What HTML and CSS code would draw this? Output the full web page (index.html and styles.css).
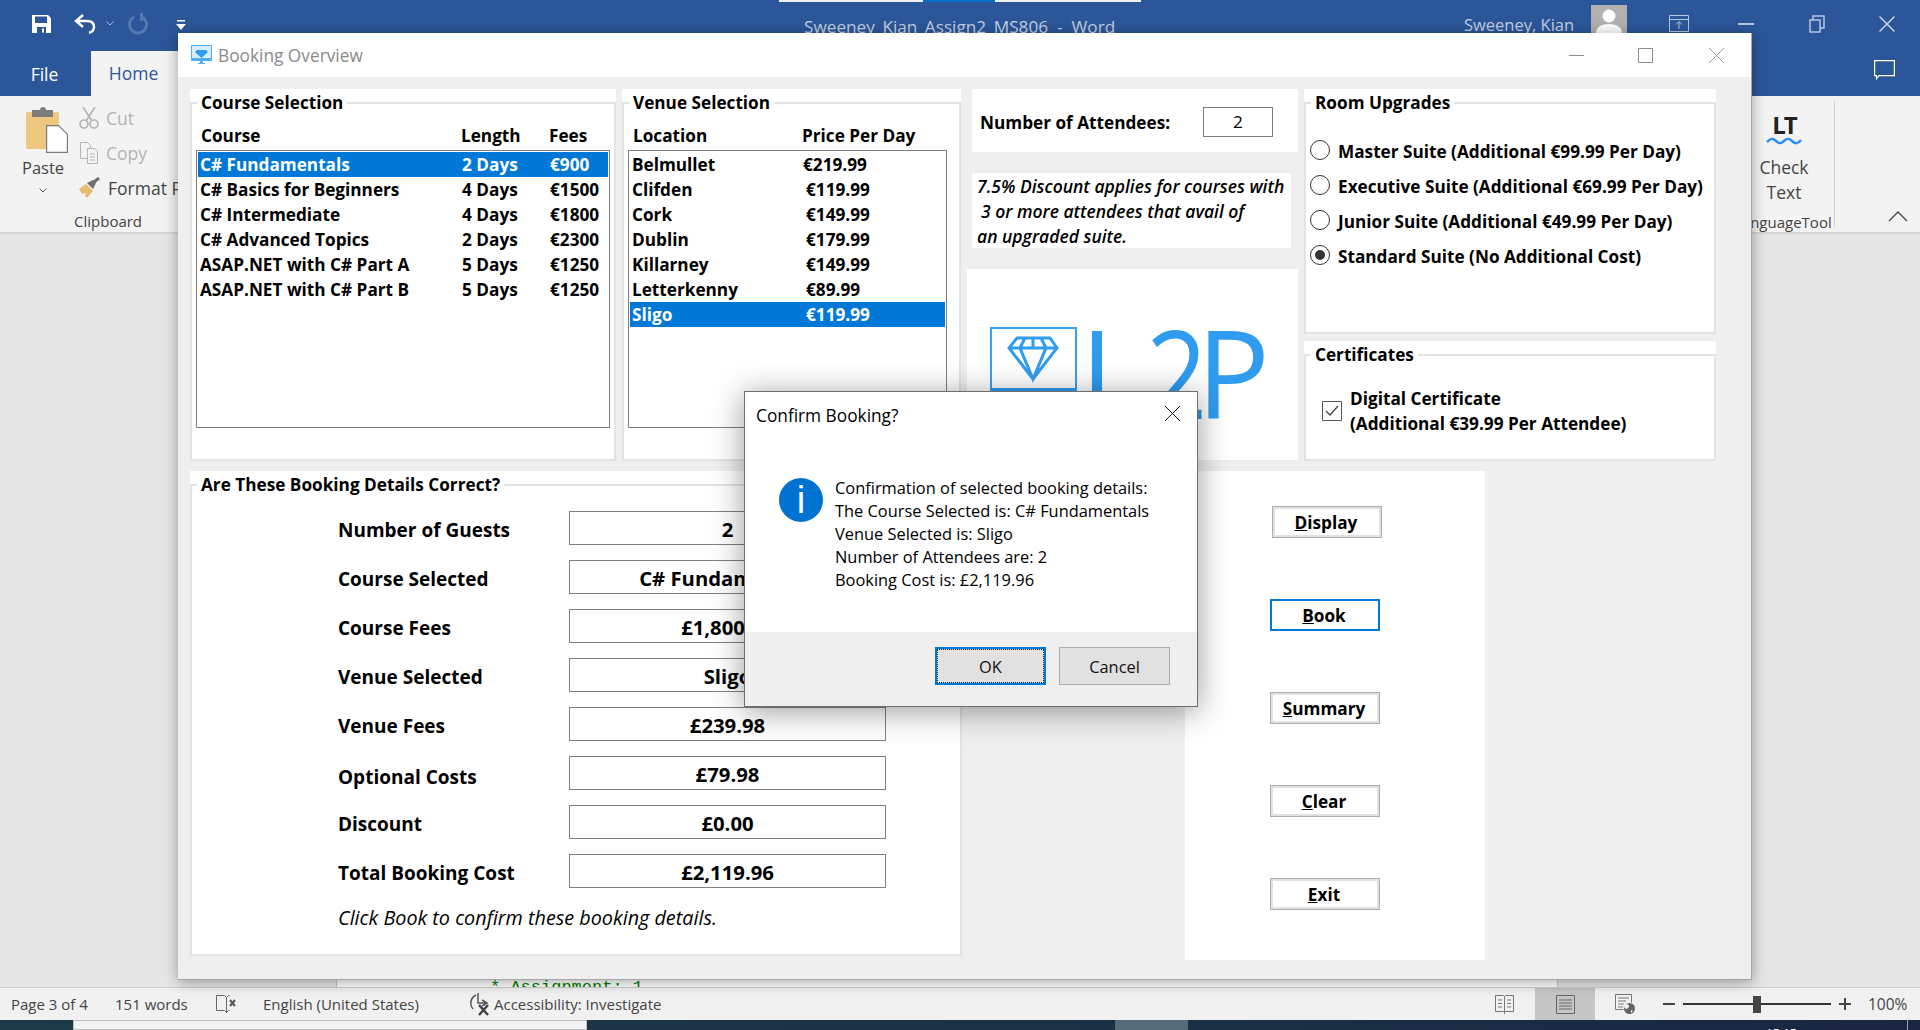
FILE: index.html
```html
<!DOCTYPE html>
<html lang="en">
<head>
    <meta charset="UTF-8">
    <meta name="viewport" content="width=device-width, initial-scale=1.0">
    <title>Booking Overview</title>
    <link rel="stylesheet" href="styles.css">
</head>
<body>
    <div class="word">
        <div class="titlebar">
            <div class="save-strip"><span class="strip-a"></span><span class="strip-b"></span><span class="strip-c"></span></div>
            <svg class="qat-save" width="19" height="19" viewBox="0 0 19 19"><path fill="#fff" d="M0 1h16l3 3v15H0z"/><path fill="#2b579a" d="M3 2.500h12v6.500H3zM5 13h9v6H5z"/><path fill="#fff" d="M10 14.500h2v4h-2z"/></svg>
            <svg class="qat-undo" width="22" height="20" viewBox="0 0 22 20"><path fill="none" stroke="#fff" stroke-width="2.400" d="M9 1 2 7l7 6M2 7h11c4 0 7 2 7 6 0 3-2 5-5 6"/></svg>
            <svg class="qat-chev" width="8" height="5" viewBox="0 0 8 5"><path fill="none" stroke="#a9bcd8" d="M.5.500 4 4 7.500.500"/></svg>
            <svg class="qat-redo" width="20" height="22" viewBox="0 0 20 22"><path fill="none" stroke="#5279b0" stroke-width="3" d="M6 4a8.500 8.500 0 1 0 8 0"/><path fill="#5279b0" d="M12 0h3v8h-3z"/></svg>
            <svg class="qat-more" width="10" height="11" viewBox="0 0 10 11"><path fill="#fff" d="M1 0h8v1.500H1zM0 4h10L5 10z"/></svg>
            <span class="doc-title">Sweeney_Kian_Assign2_MS806&nbsp; - &nbsp;Word</span>
            <span class="user-name">Sweeney, Kian</span>
            <span class="avatar"><svg width="36" height="28" viewBox="0 0 36 28"><circle cx="18" cy="11" r="6.500" fill="#fff"/><path fill="#fff" d="M5 28c0-6 6-9 13-9s13 3 13 9z"/></svg></span>
            <svg class="win-display" width="20" height="17" viewBox="0 0 20 17"><path fill="none" stroke="#b8c6dd" d="M.5.500h19v16H.5zM.5 4.500h19M10 14V7M7 9.500l3-3 3 3"/></svg>
            <svg class="win-min" width="16" height="2" viewBox="0 0 16 2"><path fill="#b8c6dd" d="M0 0h16v2H0z"/></svg>
            <svg class="win-restore" width="16" height="18" viewBox="0 0 16 18"><path fill="none" stroke="#b8c6dd" stroke-width="1.500" d="M1 5h10v12H1zM4 5V1h11v12h-4"/></svg>
            <svg class="win-close" width="16" height="16" viewBox="0 0 16 16"><path stroke="#c8d3e5" stroke-width="1.500" d="m.5.500 15 15m0-15-15 15"/></svg>
        </div>
        <div class="tabbar">
            <span class="tab-file">File</span>
            <span class="tab-home">Home</span>
            <svg class="comment-icon" width="21" height="20" viewBox="0 0 21 20"><path fill="none" stroke="#fff" stroke-width="1.200" d="M.6.600h19.800v15H5l-2.500 3v-3H.6z"/></svg>
        </div>
        <div class="ribbon">
            <div class="clipboard">
                <div class="clip-main">
                    <div class="paste">
                        <svg width="42" height="46" viewBox="0 0 42 46"><rect x="0" y="5" width="33" height="37" rx="2" fill="#edc87e"/><path fill="#7c7c7c" d="M6 3h8c0-4 6-4 6 0h7v7H6z"/><path fill="#fff" stroke="#7a7a7a" stroke-width="1.200" d="M20.600 18.600h12l8.800 8.800v17.900H20.600z"/></svg>
                        <span>Paste</span>
                        <svg class="paste-chev" width="8" height="5" viewBox="0 0 8 5"><path fill="none" stroke="#555" d="M.5.500 4 4 7.500.500"/></svg>
                    </div>
                    <div class="clip-tools">
                        <div class="tool muted"><svg width="20" height="22" viewBox="0 0 20 22"><path fill="none" stroke="#b5b5b5" stroke-width="1.700" d="m4 0 9 14M16 0 7 14"/><circle cx="5" cy="17" r="4" fill="none" stroke="#b5b5b5" stroke-width="1.700"/><circle cx="15" cy="17" r="4" fill="none" stroke="#b5b5b5" stroke-width="1.700"/></svg><span>Cut</span></div>
                        <div class="tool muted"><svg width="20" height="22" viewBox="0 0 20 22"><path fill="#f3f3f3" stroke="#b5b5b5" d="M1.500.500h7l3 3v13h-10z"/><path fill="#f3f3f3" stroke="#b5b5b5" d="M8.500 6.500h7l3 3v12h-10zM11 12h5M11 15h5M11 18h5"/></svg><span>Copy</span></div>
                        <div class="tool"><svg width="22" height="21" viewBox="0 0 22 21"><path fill="#e5bc73" d="M0 12 7 7l7 7-6 7-2-2 1-3-4 1z"/><path fill="#6f6f6f" d="m8 6 6-3 3 3-3 6z"/><path stroke="#6f6f6f" stroke-width="3" d="m15 5 5-4"/></svg><span>Format Painter</span></div>
                    </div>
                </div>
                <div class="group-label">Clipboard</div>
            </div>
            <div class="lt-group">
                <div class="lt-main">
                    <span class="lt-mark">LT</span>
                    <svg width="36" height="8" viewBox="0 0 36 8"><path fill="none" stroke="#2f8ff0" stroke-width="2.500" d="M1 5c4-4 6-4 9-1s5 3 8 0 5-3 8 0 6 3 9-1"/></svg>
                    <span class="lt-text">Check<br>Text</span>
                </div>
                <div class="lt-label">LanguageTool</div>
            </div>
            <span class="lt-sep"></span>
            <svg class="collapse" width="20" height="12" viewBox="0 0 20 12"><path fill="none" stroke="#444" stroke-width="1.300" d="m1 11 9-9 9 9"/></svg>
        </div>
        <div class="doc-area">
            <div class="page"><span class="code-line">* Assignment: 1</span></div>
        </div>
        <div class="statusbar">
            <span class="st-page">Page 3 of 4</span>
            <span class="st-words">151 words</span>
            <svg class="st-book" width="21" height="22" viewBox="0 0 21 22"><path fill="none" stroke="#666" d="M.5 2.500h8l2 2 2-2h1M10.500 4.500V20M.5 2.500v15h8l2 2 2-2h1"/><path stroke="#555" stroke-width="2" d="m14 7 5 6m0-6-5 6"/></svg>
            <span class="st-lang">English (United States)</span>
            <svg class="st-access" width="24" height="24" viewBox="0 0 24 24"><path fill="none" stroke="#555" stroke-width="1.500" d="M8 3a9 9 0 0 0-3 14M10 1v10h9M14 8l5 3-5 3"/><path stroke="#444" stroke-width="2.500" d="m11 13 9 10m0-10-9 10"/></svg>
            <span class="st-a11y">Accessibility: Investigate</span>
            <svg class="st-read" width="19" height="19" viewBox="0 0 19 19"><path fill="none" stroke="#777" d="M.5.500h8l1 1 1-1h8v16h-8l-1 1-1-1h-8zM9.500 1.500V19M3 5h4M3 8.500h4M3 12h4M12 5h4M12 8.500h4M12 12h4"/></svg>
            <span class="st-print"><svg width="19" height="19" viewBox="0 0 19 19"><path fill="none" stroke="#666" d="M.5.500h18v18H.5zM3 5h13M3 8h13M3 11h13M3 14h13"/></svg></span>
            <svg class="st-web" width="20" height="20" viewBox="0 0 20 20"><path fill="none" stroke="#777" d="M.5.500h16v8M.5.500v15h8M3 4h11M3 7h8M3 10h6M3 13h5"/><circle cx="14.500" cy="14.500" r="5.500" fill="#666"/><path fill="#f1f1f1" d="M12 10c2 1 3 2 1 4s-3 0-4-1c0-2 1-3 3-3zm4 6 2 1-2 2z"/></svg>
            <span class="zoom-minus"></span>
            <span class="zoom-track"><span class="zoom-thumb"></span></span>
            <span class="zoom-plus"></span>
            <span class="st-zoom">100%</span>
        </div>
        <div class="taskbar">
            <span class="task-search"></span>
            <span class="task-active"></span>
            <span class="task-clock">15:15</span>
            <span class="task-edge"></span>
        </div>
    </div>

    <div class="window">
        <div class="window-title">
            <svg width="21" height="20" viewBox="0 0 21 20"><path fill="#d8ecfb" stroke="#51aef0" d="M.5.500h20v15H.5z"/><path fill="#51aef0" d="M0 13h21v3H0zM9 16h3v2h2v1H7v-1h2z"/><path fill="#2f9cf0" d="M6 5h9l2 2-6.500 6L4 7z"/></svg>
            <span>Booking Overview</span>
            <svg class="bo-min" width="15" height="1" viewBox="0 0 15 1"><path fill="#8c8c8c" d="M0 0h15v1H0z"/></svg>
            <svg class="bo-max" width="15" height="15" viewBox="0 0 15 15"><path fill="none" stroke="#8c8c8c" d="M.5.500h14v14H.5z"/></svg>
            <svg class="bo-close" width="15" height="15" viewBox="0 0 15 15"><path stroke="#a0a0a0" d="m0 0 15 15m0-15L0 15"/></svg>
        </div>
        <div class="window-body">
            <div class="top-row">
                <div class="panel course-panel">
                    <fieldset class="group">
                        <legend>Course Selection</legend>
                        <div class="list-head course-cols"><span>Course</span><span>Length</span><span>Fees</span></div>
                        <div class="listbox course-list">
                            <div class="row course-cols selected"><span>C# Fundamentals</span><span>2 Days</span><span>€900</span></div>
                            <div class="row course-cols"><span>C# Basics for Beginners</span><span>4 Days</span><span>€1500</span></div>
                            <div class="row course-cols"><span>C# Intermediate</span><span>4 Days</span><span>€1800</span></div>
                            <div class="row course-cols"><span>C# Advanced Topics</span><span>2 Days</span><span>€2300</span></div>
                            <div class="row course-cols"><span>ASAP.NET with C# Part A</span><span>5 Days</span><span>€1250</span></div>
                            <div class="row course-cols"><span>ASAP.NET with C# Part B</span><span>5 Days</span><span>€1250</span></div>
                        </div>
                    </fieldset>
                </div>
                <div class="panel venue-panel">
                    <fieldset class="group">
                        <legend>Venue Selection</legend>
                        <div class="list-head venue-head"><span>Location</span><span>Price Per Day</span></div>
                        <div class="listbox venue-list">
                            <div class="row venue-cols"><span>Belmullet</span><span class="nudge">€219.99</span></div>
                            <div class="row venue-cols"><span>Clifden</span><span>€119.99</span></div>
                            <div class="row venue-cols"><span>Cork</span><span>€149.99</span></div>
                            <div class="row venue-cols"><span>Dublin</span><span>€179.99</span></div>
                            <div class="row venue-cols"><span>Killarney</span><span>€149.99</span></div>
                            <div class="row venue-cols"><span>Letterkenny</span><span>€89.99</span></div>
                            <div class="row venue-cols selected"><span>Sligo</span><span>€119.99</span></div>
                        </div>
                    </fieldset>
                </div>
                <div class="middle-col">
                    <div class="attendees">
                        <span class="attendees-label">Number of Attendees:</span>
                        <span class="attendees-input">2</span>
                    </div>
                    <div class="discount-note">
                        7.5% Discount applies for courses with<br>
                        <span class="indent">3 or more attendees that avail of</span><br>
                        an upgraded suite.
                    </div>
                    <div class="logo-panel">
                        <svg class="logo-box" width="87" height="65" viewBox="0 0 87 65"><path fill="none" stroke="#3aa0f2" stroke-width="2" d="M1 1h85v63H1z"/><path fill="#2f9cf0" d="M0 61h87v4H0z"/><path fill="none" stroke="#2f9cf0" stroke-width="3" d="M27 11h33l7 10-24 31-24-31zM19 21h48M35 11l-5 10 13 31 13-31-5-10M43 11v10"/></svg>
                        <span class="logo-l">L</span><span class="logo-two">2</span><span class="logo-p">P</span>
                    </div>
                </div>
                <div class="right-col">
                    <div class="panel room-panel">
                        <fieldset class="group">
                            <legend>Room Upgrades</legend>
                            <div class="radio-list">
                                <div class="radio-row"><span class="radio"></span>Master Suite (Additional €99.99 Per Day)</div>
                                <div class="radio-row"><span class="radio"></span>Executive Suite (Additional €69.99 Per Day)</div>
                                <div class="radio-row"><span class="radio"></span>Junior Suite (Additional €49.99 Per Day)</div>
                                <div class="radio-row"><span class="radio checked"></span>Standard Suite (No Additional Cost)</div>
                            </div>
                        </fieldset>
                    </div>
                    <div class="panel cert-panel">
                        <fieldset class="group">
                            <legend>Certificates</legend>
                            <div class="cert-row">
                                <svg width="20" height="20" viewBox="0 0 20 20"><path fill="#fff" stroke="#555" d="M.5.500h19v19H.5z"/><path fill="none" stroke="#444" stroke-width="1.300" d="m4 10 4 4 8-9"/></svg>
                                <span>Digital Certificate<br>(Additional €39.99 Per Attendee)</span>
                            </div>
                        </fieldset>
                    </div>
                </div>
            </div>
            <div class="bottom-row">
                <div class="panel details-panel">
                    <fieldset class="group">
                        <legend>Are These Booking Details Correct?</legend>
                        <div class="detail-rows">
                            <div class="detail-label">Number of Guests</div><div class="detail-value">2</div>
                            <div class="detail-label">Course Selected</div><div class="detail-value">C# Fundamentals</div>
                            <div class="detail-label">Course Fees</div><div class="detail-value">£1,800.00</div>
                            <div class="detail-label">Venue Selected</div><div class="detail-value">Sligo</div>
                            <div class="detail-label">Venue Fees</div><div class="detail-value">£239.98</div>
                            <div class="detail-label low">Optional Costs</div><div class="detail-value">£79.98</div>
                            <div class="detail-label">Discount</div><div class="detail-value">£0.00</div>
                            <div class="detail-label">Total Booking Cost</div><div class="detail-value">£2,119.96</div>
                        </div>
                        <p class="hint">Click Book to confirm these booking details.</p>
                    </fieldset>
                </div>
                <div class="actions-panel">
                    <button class="action shifted"><u>D</u>isplay</button>
                    <button class="action focused"><u>B</u>ook</button>
                    <button class="action"><u>S</u>ummary</button>
                    <button class="action"><u>C</u>lear</button>
                    <button class="action"><u>E</u>xit</button>
                </div>
            </div>
        </div>
    </div>

    <div class="dialog">
        <div class="dialog-title">
            <span>Confirm Booking?</span>
            <svg width="15" height="15" viewBox="0 0 15 15"><path stroke="#111" d="m0 0 15 15m0-15L0 15"/></svg>
        </div>
        <div class="dialog-body">
            <span class="info-icon">i</span>
            <div class="dialog-text">
                Confirmation of selected booking details:<br>
                The Course Selected is: C# Fundamentals<br>
                Venue Selected is: Sligo<br>
                Number of Attendees are: 2<br>
                Booking Cost is: £2,119.96
            </div>
        </div>
        <div class="dialog-footer">
            <button class="dlg-btn default">OK</button>
            <button class="dlg-btn">Cancel</button>
        </div>
    </div>
</body>
</html>
```

FILE: styles.css
```css
html, body {
    margin: 0;
    padding: 0;
}
body {
    width: 1920px;
    height: 1030px;
    overflow: hidden;
    position: relative;
    font-family: "Open Sans", "Noto Sans", sans-serif;
    color: #000;
    background: #e6e6e6;
}

/* Word behind the form */
.word {
    display: flex;
    flex-direction: column;
    height: 1030px;
}
.titlebar {
    position: relative;
    flex: none;
    height: 51px;
    display: flex;
    align-items: center;
    padding-bottom: 4px;
    box-sizing: border-box;
    background: #2b579a;
    color: #c3cfe2;
    font-size: 16.500px;
}
.save-strip {
    position: absolute;
    top: 0;
    left: 779px;
    display: flex;
    height: 2px;
}
.strip-a { width: 144px; background: #f2f2f2; }
.strip-b { width: 72px; background: #0a6fc4; }
.strip-c { width: 146px; background: #f2f2f2; }
.qat-save { margin-left: 32px; }
.qat-undo { margin-left: 23px; }
.qat-chev { margin-left: 10px; }
.qat-redo { margin-left: 14px; }
.qat-more { margin-left: 28px; margin-top: 3px; }
.doc-title { margin-left: 618px; margin-top: 6px; width: 400px; white-space: nowrap; font-size: 17.200px; }
.user-name { margin-left: 260px; width: 127px; white-space: nowrap; margin-top: 1px; }
.avatar { width: 36px; height: 28px; background: #b1b1b1; align-self: flex-start; margin-top: 5px; display: block; }
.win-display { margin-left: 42px; }
.win-min { margin-left: 49px; }
.win-restore { margin-left: 55px; }
.win-close { margin-left: 54px; }

.tabbar {
    flex: none;
    height: 45px;
    display: flex;
    align-items: center;
    background: #2b579a;
    font-size: 17.500px;
    position: relative;
}
.tab-file { width: 89px; text-align: center; color: #fff; }
.tab-home {
    margin-left: 2px;
    width: 87px;
    height: 45px;
    line-height: 44px;
    text-align: center;
    color: #2b579a;
    background: #f3f3f3;
    padding-right: 2px;
    box-sizing: border-box;
}
.comment-icon { margin-left: auto; margin-right: 25px; margin-top: -8px; }

.ribbon {
    flex: none;
    height: 138px;
    box-sizing: border-box;
    display: flex;
    background: #f3f3f3;
    border-bottom: 2px solid #d6d6d6;
    color: #444;
    font-size: 17.500px;
}
.clipboard {
    width: 178px;
    display: flex;
    flex-direction: column;
    overflow: hidden;
}
.clip-main {
    display: flex;
    flex: 1;
}
.paste {
    width: 78px;
    padding: 11px 0 0 26px;
    box-sizing: border-box;
    display: flex;
    flex-direction: column;
    font-size: 16.500px;
}
.paste span { line-height: 24px; margin: 3px 0 0 -4px; }
.paste-chev { margin: 8px 0 0 13px; }
.clip-tools {
    padding: 4px 0 0 11px;
    white-space: nowrap;
}
.tool {
    display: flex;
    align-items: center;
    gap: 7px;
    height: 35px;
}
.tool.muted { color: #b3b3b3; }
.group-label {
    height: 22px;
    line-height: 22px;
    padding-left: 74px;
    font-size: 15px;
}
.lt-group {
    margin-left: auto;
    width: 100px;
    height: 136px;
    display: flex;
    flex-direction: column;
    overflow: hidden;
}
.lt-main {
    flex: 1;
    display: flex;
    flex-direction: column;
    align-items: center;
}
.lt-mark {
    font-size: 24px;
    font-weight: 700;
    line-height: 24px;
    letter-spacing: -2px;
    color: #222;
    margin-top: 17px;
}
.lt-text { text-align: center; line-height: 25px; margin-top: 10px; }
.lt-label {
    flex: none;
    height: 20px;
    line-height: 20px;
    padding-right: 5px;
    font-size: 15px;
    white-space: nowrap;
    text-align: right;
}
.lt-sep { width: 1px; height: 126px; margin-top: 5px; background: #cfcfcf; }
.collapse { margin: 114px 12px 0 53px; }

.doc-area {
    flex: 1;
    display: flex;
    min-height: 0;
}
.page {
    margin-left: 336px;
    width: 1222px;
    background: #fff;
    border-left: 1px solid #c6c6c6;
    border-right: 1px solid #c6c6c6;
    box-sizing: border-box;
    display: flex;
    align-items: flex-end;
    overflow: hidden;
}
.code-line {
    margin: 0 0 -9px 153px;
    font: 17px/16px "Liberation Mono", monospace;
    color: #008000;
}

.statusbar {
    flex: none;
    height: 33px;
    box-sizing: border-box;
    border-top: 1px solid #cfcfcf;
    background: #f1f1f1;
    display: flex;
    align-items: center;
    color: #444;
    font-size: 15px;
    white-space: nowrap;
}
.st-page { margin-left: 11px; width: 104px; }
.st-words { width: 101px; }
.st-book { width: 21px; }
.st-lang { margin-left: 26px; width: 205px; }
.st-a11y { margin-left: 2px; width: 180px; }
.st-read { margin-left: 821px; }
.st-print {
    margin-left: 21px;
    width: 60px;
    height: 32px;
    background: #c6c6c6;
    display: flex;
    align-items: center;
    justify-content: center;
}
.st-web { margin-left: 20px; }
.zoom-minus { margin-left: 28px; width: 12px; height: 1.500px; background: #444; }
.zoom-track {
    margin-left: 8px;
    width: 148px;
    height: 2px;
    background: #333;
    display: flex;
    align-items: center;
    padding-left: 70px;
    box-sizing: border-box;
}
.zoom-thumb { width: 8px; height: 17px; background: #444; }
.zoom-plus {
    margin-left: 8px;
    width: 12px;
    height: 1.500px;
    background: #444;
    display: flex;
    align-items: center;
    justify-content: center;
}
.zoom-plus::after { content: ""; width: 1.500px; height: 12px; background: #444; flex: none; }
.st-zoom { margin-left: 17px; font-size: 15.500px; }

.taskbar {
    flex: none;
    height: 10px;
    display: flex;
    overflow: hidden;
    background: linear-gradient(90deg, #1c3a48 0%, #1b3245 50%, #1a2642 100%);
    color: #fff;
    font-size: 12px;
}
.task-search {
    margin-left: 73px;
    width: 514px;
    background: #f3f3f3;
    border: 1px solid #bdbdbd;
    box-sizing: border-box;
}
.task-active { margin-left: 528px; width: 73px; background: #566a78; }
.task-clock { margin-left: 578px; padding-top: 6px; line-height: 16px; }
.task-edge { margin-left: 110px; width: 1px; background: #9aa3b2; }

/* Booking form */
.window {
    position: absolute;
    left: 178px;
    top: 33px;
    width: 1574px;
    height: 947px;
    box-sizing: border-box;
    background: #efefef;
    border-right: 1px solid #a5a5a5;
    border-bottom: 1px solid #a5a5a5;
    box-shadow: 0 2px 14px rgba(0, 0, 0, .35);
}
.window-title {
    height: 44px;
    background: #fff;
    display: flex;
    align-items: center;
    padding-left: 13px;
    color: #8a8a8a;
    font-size: 17.300px;
}
.window-title span { margin-left: 6px; }
.bo-min { margin-left: auto; }
.bo-max { margin-left: 54px; }
.bo-close { margin: 0 27px 0 56px; }
.window-body { padding: 12px 0 0 12px; }
.top-row { display: flex; gap: 6px; height: 372px; }
.bottom-row { display: flex; margin-top: 10px; }

.panel {
    background: #fff;
    box-sizing: border-box;
    padding-top: 1px;
    height: 100%;
}
.group {
    margin: 0;
    padding: 0;
    height: 100%;
    box-sizing: border-box;
    border: 2px solid #e3e3e3;
    min-width: 0;
}
legend {
    margin-left: 5px;
    padding: 0 4px;
    line-height: 26px;
    font-size: 17.200px;
    font-weight: 700;
}
.course-panel { width: 426px; }
.venue-panel { width: 339px; }

.list-head {
    padding: 6px 0 0 9px;
    height: 34px;
    box-sizing: border-box;
    line-height: 28px;
    font-size: 17.200px;
    font-weight: 700;
}
.course-cols { display: grid; grid-template-columns: 262px 88px 1fr; }
.list-head.course-cols { grid-template-columns: 260px 88px 1fr; }
.venue-head { display: grid; grid-template-columns: 169px 1fr; }
.listbox {
    margin: 0 4px;
    height: 278px;
    box-sizing: border-box;
    border: 1px solid #7f7f7f;
    padding: 1px;
}
.venue-list { width: 319px; }
.row {
    height: 25px;
    line-height: 26px;
    padding-left: 2px;
    font-size: 17.200px;
    font-weight: 700;
    white-space: nowrap;
}
.venue-cols { display: grid; grid-template-columns: 174px 1fr; }
.nudge { margin-left: -3px; }
.selected { background: #0078d7; color: #fff; }

.middle-col { width: 331px; display: flex; flex-direction: column; }
.attendees {
    margin-left: 5px;
    height: 63px;
    box-sizing: border-box;
    padding: 3px 25px 0 8px;
    background: #fff;
    display: flex;
    align-items: center;
    justify-content: space-between;
    font-size: 17.200px;
    font-weight: 700;
}
.attendees-label { padding-top: 1px; }
.attendees-input {
    width: 70px;
    height: 30px;
    box-sizing: border-box;
    border: 1px solid #7f7f7f;
    text-align: center;
    line-height: 28px;
    font-weight: 400;
}
.discount-note {
    margin: 21px 7px 21px 5px;
    height: 75px;
    box-sizing: border-box;
    padding: 1px 0 0 5px;
    background: #fff;
    line-height: 25px;
    font-size: 17.500px;
    font-style: italic;
    font-weight: 600;
    white-space: nowrap;
}
.indent { margin-left: 4px; }
.logo-panel {
    height: 191px;
    background: #fff;
    display: flex;
    align-items: flex-start;
    padding: 53px 0 0 23px;
    box-sizing: border-box;
    overflow: hidden;
    font-size: 122px;
    line-height: 100px;
    color: #2f9cf0;
}
.logo-box { flex: none; margin-top: 5px; }
.logo-l { margin-left: 3px; }
.logo-two { margin-left: 2px; transform: scaleX(.88); transform-origin: left center; }
.logo-p { margin-left: -19px; }

.right-col { width: 412px; display: flex; flex-direction: column; gap: 7px; }
.room-panel { height: 245px; }
.cert-panel { height: 120px; }
.radio-list { margin-top: 18px; padding-left: 4px; }
.radio-row {
    height: 35px;
    display: flex;
    align-items: center;
    gap: 8px;
    font-size: 17.200px;
    font-weight: 700;
    white-space: nowrap;
}
.radio {
    width: 20px;
    height: 20px;
    box-sizing: border-box;
    border: 1px solid #333;
    border-radius: 50%;
    margin-top: -3px;
    display: flex;
    align-items: center;
    justify-content: center;
    background: #fff;
}
.radio.checked::after {
    content: "";
    width: 10px;
    height: 10px;
    border-radius: 50%;
    background: #333;
}
.cert-row {
    margin-top: 18px;
    padding-left: 16px;
    display: flex;
    align-items: center;
    gap: 8px;
    line-height: 25px;
    font-size: 17.200px;
    font-weight: 700;
    white-space: nowrap;
}

.details-panel { width: 772px; height: 485px; }
.detail-rows {
    display: grid;
    grid-template-columns: 231px 317px;
    grid-auto-rows: 34px;
    row-gap: 15px;
    padding: 13px 0 0 146px;
}
.detail-label {
    padding-top: 4px;
    line-height: 30px;
    font-size: 19px;
    font-weight: 700;
}
.detail-label.low { padding-top: 8px; line-height: 26px; }
.detail-value {
    border: 1px solid #7f7f7f;
    box-sizing: border-box;
    text-align: center;
    padding-top: 3px;
    line-height: 28px;
    font-size: 20.300px;
    font-weight: 700;
}
.hint {
    margin: 18px 0 0 146px;
    line-height: 24px;
    font-size: 19.800px;
    font-style: italic;
}
.actions-panel {
    margin-left: 223px;
    width: 300px;
    height: 489px;
    background: #fff;
    box-sizing: border-box;
    padding: 35px 0 0 85px;
    display: flex;
    flex-direction: column;
    align-items: flex-start;
    gap: 61px;
}
.action {
    width: 110px;
    height: 32px;
    padding: 0 2px 0 0;
    background: #fff;
    border: 1px solid #adadad;
    box-shadow: inset 0 0 0 2px #e1e1e1;
    font: 700 17.200px "Open Sans", sans-serif;
    color: #000;
}
.action.shifted { margin-left: 2px; }
.action.focused { border: 2px solid #0078d7; box-shadow: none; }

/* Message box on top of the form */
.dialog {
    position: absolute;
    left: 744px;
    top: 391px;
    width: 454px;
    height: 316px;
    box-sizing: border-box;
    border: 1px solid #6f6f6f;
    background: #fff;
    display: flex;
    flex-direction: column;
    box-shadow: 0 4px 30px rgba(0, 0, 0, .4);
    font-size: 16.400px;
}
.dialog-title {
    height: 46px;
    flex: none;
    display: flex;
    align-items: center;
    justify-content: space-between;
    padding: 0 17px 0 11px;
    font-size: 17.300px;
}
.dialog-title svg { margin-top: -3px; }
.dialog-body {
    flex: 1;
    display: flex;
    gap: 12px;
    padding: 38px 0 0 34px;
}
.info-icon {
    width: 44px;
    height: 44px;
    margin-top: 2px;
    border-radius: 50%;
    background: #0072d2;
    color: #fff;
    text-align: center;
    font: 38px/44px "Liberation Sans", sans-serif;
}
.dialog-text { line-height: 23px; white-space: nowrap; }
.dialog-footer {
    flex: none;
    height: 74px;
    background: #efefef;
    display: flex;
    justify-content: flex-end;
    align-items: flex-start;
    gap: 13px;
    padding: 15px 27px 0 0;
    box-sizing: border-box;
}
.dlg-btn {
    width: 111px;
    height: 38px;
    padding: 0;
    background: #e1e1e1;
    border: 1px solid #adadad;
    font: 16.400px "Open Sans", sans-serif;
    color: #111;
}
.dlg-btn.default {
    border: 2px solid #0078d7;
    outline: 1px dotted #222;
    outline-offset: -3px;
}
```
